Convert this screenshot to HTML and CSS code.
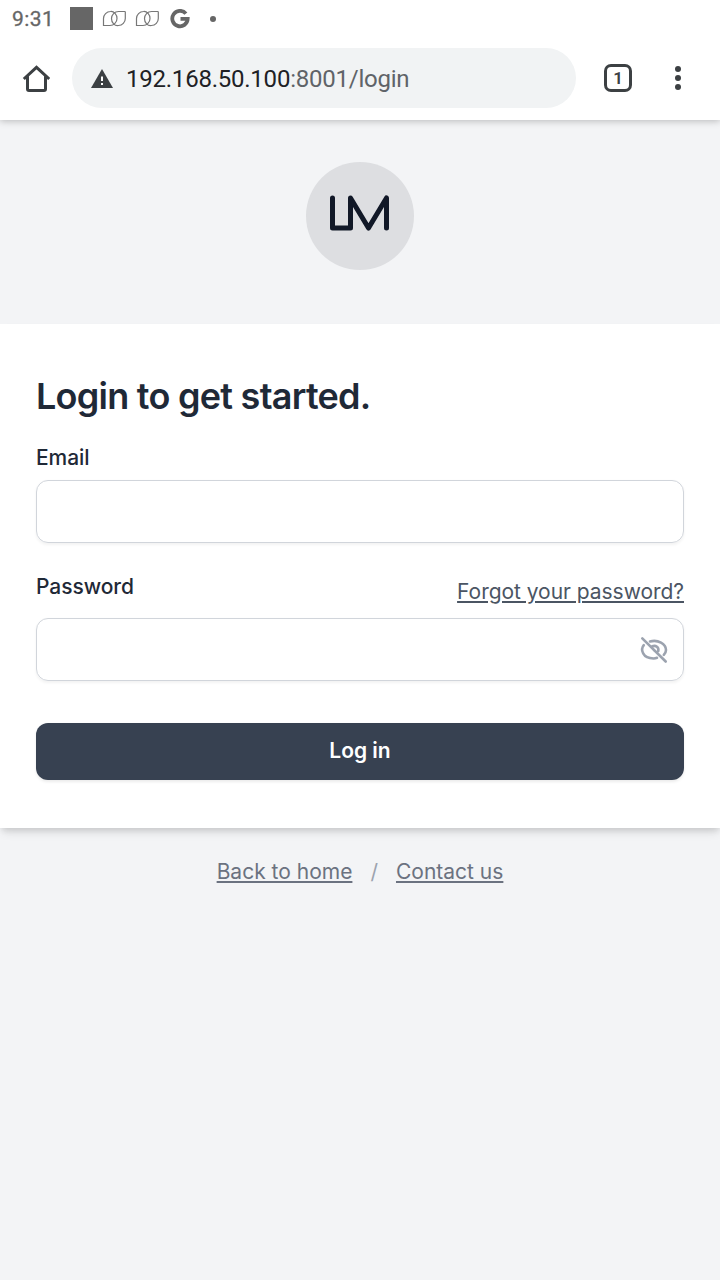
FILE: index.html
```html
<!DOCTYPE html>
<html lang="en">
<head>
<meta charset="utf-8">
<title>Login</title>
<link rel="stylesheet" href="styles.css">
</head>
<body>
<header class="browser">
  <div class="status">
    <span class="clock">9:31</span>
    <span class="square"></span>
    <svg class="leaf" width="24" height="18" viewBox="0 0 24 18"><path d="M1.500 16V8.500A7 7 0 0 1 8.500 1.500A6 7 0 0 1 15 8.500A7 7 0 0 1 8 15.500H1.500ZM23.300 1.500V8.500A7 7 0 0 1 16.500 15.500A6 7 0 0 1 9.500 8.500A7 7 0 0 1 16.500 1.500H23.300"/></svg>
    <svg class="leaf second" width="24" height="18" viewBox="0 0 24 18"><path d="M1.500 16V8.500A7 7 0 0 1 8.500 1.500A6 7 0 0 1 15 8.500A7 7 0 0 1 8 15.500H1.500ZM23.300 1.500V8.500A7 7 0 0 1 16.500 15.500A6 7 0 0 1 9.500 8.500A7 7 0 0 1 16.500 1.500H23.300"/></svg>
    <svg class="google" width="20" height="20" viewBox="0 0 20 20"><path d="M15.900 4.600A7.700 7.700 0 1 0 17.700 9.800H10.500"/></svg>
    <span class="dot"></span>
  </div>
  <div class="toolbar">
    <svg class="home" width="28" height="28" viewBox="0 0 28 28"><path d="M1.800 15L14.500 3.300L27.200 15M5.500 12.500V25Q5.500 26.500 7 26.500H22Q23.500 26.500 23.500 25V12.500"/></svg>
    <div class="address">
      <svg width="22" height="19" viewBox="0 0 22 19"><path class="warn" d="M11 0L22 19H0Z"/><path class="mark" d="M10 7.500H12V12H10ZM10 14H12V16H10Z"/></svg>
      <span class="url">192.168.50.100<span class="path">:8001/login</span></span>
    </div>
    <span class="tabs">1</span>
    <svg class="menu" width="6" height="24" viewBox="0 0 6 24"><circle cx="3" cy="3" r="3"/><circle cx="3" cy="12" r="3"/><circle cx="3" cy="21" r="3"/></svg>
  </div>
</header>
<main>
  <div class="logo">
    <svg width="108" height="108" viewBox="0 0 108 108"><path d="M26.500 36V66H44.500V36L62.500 66L80.500 36V66"/></svg>
  </div>
  <form class="card">
    <h1>Login to get started.</h1>
    <label for="email">Email</label>
    <div class="field email"><input id="email" type="email"></div>
    <div class="row">
      <label for="password">Password</label>
      <a class="forgot" href="#">Forgot your password?</a>
    </div>
    <div class="field">
      <input id="password" type="password">
      <svg class="eye" width="30" height="30" viewBox="0 0 30 30"><path d="M3.300 3.300L26.700 26.500M4.800 10.200C1.200 14.500 3.500 23.500 14.500 23.500Q16.500 23.500 18 22.800M11 6.500C19 4.200 27 9 27 15Q27 17.500 24.800 19.800M13.300 11.200C17 10 20 12.500 19.300 16M14.500 14.500L16 16"/></svg>
    </div>
    <button type="button">Log in</button>
  </form>
  <nav class="links"><a href="#">Back to home</a><span>/</span><a href="#">Contact us</a></nav>
</main>
</body>
</html>
```
FILE: styles.css
```css
* { box-sizing: border-box; }
body { margin: 0; min-height: 1280px; background: #f3f4f6; font-family: Inter, sans-serif; font-size: 21px; line-height: 30px; color: #1f2937; }
svg { display: block; flex: none; fill: none; }
.browser { position: relative; height: 120px; background: #fff; font-family: Roboto, sans-serif; box-shadow: 0 1px 7px rgba(0,0,0,.25); }
.status { display: flex; align-items: center; height: 36px; padding: 1px 0 0 12px; color: #666; }
.clock { width: 58px; font-size: 21px; letter-spacing: .4px; -webkit-text-stroke: .3px #666; }
.square { width: 23px; height: 23px; margin-right: 9px; background: #666; }
.leaf { stroke: #777; stroke-width: 1.2; }
.second { margin-left: 9px; }
.google { margin-left: 11px; stroke: #666; stroke-width: 3.8; }
.dot { width: 6px; height: 6px; margin-left: 20px; border-radius: 50%; background: #666; }
.toolbar { display: flex; align-items: center; height: 84px; padding-left: 22px; }
.home { stroke: #3c4043; stroke-width: 3; }
.address { display: flex; align-items: center; width: 504px; height: 60px; margin-left: 22px; padding-left: 19px; border-radius: 30px; background: #f1f3f4; }
.warn { fill: #3c4043; }
.mark { fill: #fff; }
.url { margin: 2px 0 0 13px; font-size: 24px; letter-spacing: -.23px; color: #202124; }
.path { color: #5f6368; }
.tabs { width: 28px; height: 28px; margin-left: 28px; border: 3px solid #3c4043; border-radius: 7px; font-size: 17px; font-weight: 600; line-height: 22px; text-align: center; color: #3c4043; }
.menu { margin-left: 43px; fill: #3c4043; }
.logo { width: 108px; height: 108px; margin: 42px auto 54px; border-radius: 50%; background: #dddee1; }
.logo path { stroke: #111827; stroke-width: 5; stroke-linecap: round; stroke-linejoin: round; }
.card { display: flex; flex-direction: column; height: 504px; padding: 48px 36px; background: #fff; box-shadow: 0 6px 9px -1.5px rgba(0,0,0,.1), 0 3px 6px -1.5px rgba(0,0,0,.1); }
h1 { margin: 0 0 23px; font-size: 36px; font-weight: 600; line-height: 48px; letter-spacing: -.74px; }
label { font-weight: 500; letter-spacing: -.05px; }
.field { display: flex; align-items: center; justify-content: flex-end; height: 63px; margin-top: 8px; padding-right: 14px; border: 1px solid #d1d5db; border-radius: 12px; box-shadow: 0 1.5px 3px rgba(0,0,0,.05); }
.email { margin-top: 7px; }
input { flex: 1; min-width: 0; height: 100%; padding: 0 18px; border: 0; outline: 0; background: none; font: inherit; }
.row { display: flex; justify-content: space-between; margin-top: 29px; height: 38px; }
.forgot { margin-top: 5px; letter-spacing: -.04px; color: #4b5563; }
a { text-decoration-thickness: 2px; text-underline-offset: 2px; }
.eye { stroke: #9ca3af; stroke-width: 2.6; stroke-linecap: round; }
button { height: 57px; margin-top: 42px; padding: 0 0 2px; border: 0; border-radius: 12px; background: #374151; color: #fff; font: 600 21px/30px Inter, sans-serif; box-shadow: 0 1.5px 3px rgba(0,0,0,.08); }
.links { display: flex; justify-content: center; gap: 18px; margin-top: 29px; color: #9ca3af; }
.links a { color: #6b7280; }
```
